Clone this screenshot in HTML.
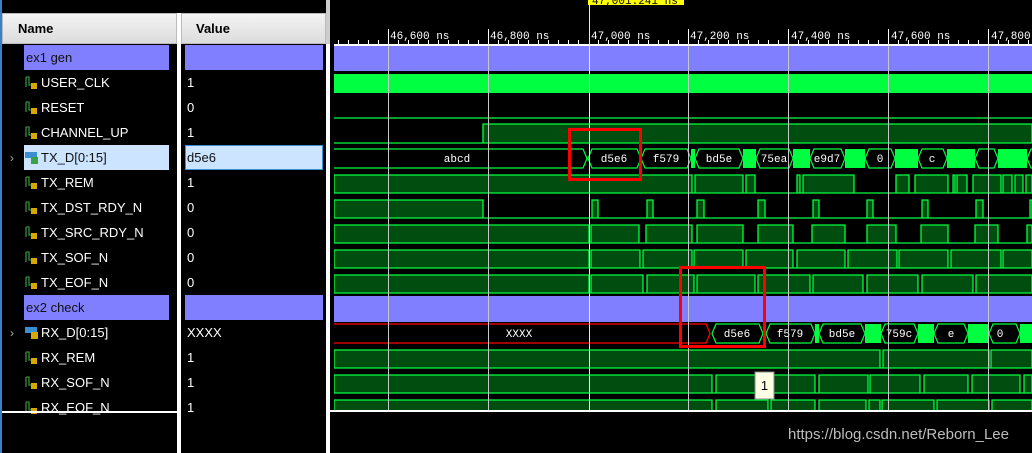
<!DOCTYPE html>
<html><head><meta charset="utf-8"><style>
body{margin:0;width:1032px;height:453px;background:#000;overflow:hidden;position:relative;font-family:"Liberation Sans",sans-serif}
.a{position:absolute}
.hdr{top:13px;height:31px;background:linear-gradient(#f4f4f4,#dcdcdc);border:1px solid #bbb;box-sizing:border-box;font-weight:bold;font-size:13px;color:#000;line-height:30px}
.n{position:absolute;left:24px;height:25px;line-height:25px;font-size:13px;color:#fff;white-space:nowrap}
.v{position:absolute;left:187px;height:25px;line-height:25px;font-size:13px;color:#fff}
.ic{position:absolute;left:25px;width:14px;height:14px}
</style></head><body>
<div class="a" style="left:0;top:0;width:2px;height:453px;background:#3b7fc4"></div>
<div class="a hdr" style="left:2px;width:175px;padding-left:15px">Name</div>
<div class="a hdr" style="left:181px;width:145px;padding-left:14px">Value</div>
<div class="a" style="left:177px;top:13px;width:4px;height:440px;background:#fff"></div>
<div class="a" style="left:326px;top:0;width:4px;height:453px;background:#fff"></div>
<div class="a" style="left:326px;top:0;width:4px;height:44px;background:#ccc"></div>
<!-- highlights -->
<div class="a" style="left:24px;top:45px;width:145px;height:25px;background:#7f7fff"></div>
<div class="a" style="left:185px;top:45px;width:138px;height:25px;background:#7f7fff"></div>
<div class="a" style="left:24px;top:145px;width:145px;height:25px;background:#cce4ff"></div>
<div class="a" style="left:185px;top:145px;width:138px;height:25px;background:#cce4ff;border:1px solid #3a8fd0;box-sizing:border-box"></div>
<div class="a" style="left:24px;top:295px;width:145px;height:25px;background:#7f7fff"></div>
<div class="a" style="left:185px;top:295px;width:138px;height:25px;background:#7f7fff"></div>
<div class="n" style="top:45px;left:26px;color:#111">ex1 gen</div>
<div class="n" style="top:70px;left:41px">USER_CLK</div>
<div class="n" style="top:95px;left:41px">RESET</div>
<div class="n" style="top:120px;left:41px">CHANNEL_UP</div>
<div class="n" style="top:145px;left:41px;color:#111">TX_D[0:15]</div>
<div class="n" style="top:170px;left:41px">TX_REM</div>
<div class="n" style="top:195px;left:41px">TX_DST_RDY_N</div>
<div class="n" style="top:220px;left:41px">TX_SRC_RDY_N</div>
<div class="n" style="top:245px;left:41px">TX_SOF_N</div>
<div class="n" style="top:270px;left:41px">TX_EOF_N</div>
<div class="n" style="top:295px;left:26px;color:#111">ex2 check</div>
<div class="n" style="top:320px;left:41px">RX_D[0:15]</div>
<div class="n" style="top:345px;left:41px">RX_REM</div>
<div class="n" style="top:370px;left:41px">RX_SOF_N</div>
<div class="n" style="top:395px;left:41px">RX_EOF_N</div>
<div class="v" style="top:70px">1</div><div class="v" style="top:95px">0</div><div class="v" style="top:120px">1</div>
<div class="v" style="top:145px;color:#111">d5e6</div><div class="v" style="top:170px">1</div><div class="v" style="top:195px">0</div>
<div class="v" style="top:220px">0</div><div class="v" style="top:245px">0</div><div class="v" style="top:270px">0</div>
<div class="v" style="top:320px">XXXX</div><div class="v" style="top:345px">1</div><div class="v" style="top:370px">1</div><div class="v" style="top:395px">1</div>
<svg class="a" style="left:0;top:0" width="180" height="453">
<g font-family="Liberation Sans" font-size="12" fill="#aaa"><text x="10" y="162">›</text><text x="10" y="337">›</text></g>
<g id="s">
<path d="M26 77v10M26 77h3v8h2" stroke="#3a8a3a" fill="none" stroke-width="1.3"/><rect x="31" y="83" width="6" height="6" fill="#d8a800"/>
</g>
<use href="#s" y="25"/><use href="#s" y="50"/><use href="#s" y="100"/><use href="#s" y="125"/><use href="#s" y="150"/><use href="#s" y="175"/><use href="#s" y="200"/><use href="#s" y="275"/><use href="#s" y="300"/><use href="#s" y="325"/>
<rect x="25" y="152" width="12" height="6" fill="#3a8fd0"/><rect x="31" y="157" width="7" height="7" fill="#3aa04a"/>
<rect x="25" y="327" width="12" height="6" fill="#3a8fd0"/><rect x="31" y="332" width="7" height="7" fill="#d8a800"/>
<rect x="2" y="411" width="175" height="2" fill="#fff"/><rect x="181" y="411" width="145" height="2" fill="#fff"/>
</svg>
<svg class="a" style="left:0;top:0" width="1032" height="453">
<defs><clipPath id="c"><rect x="334" y="0" width="698" height="411"/></clipPath></defs>
<g clip-path="url(#c)">
<!-- ruler -->
<rect x="334" y="44" width="698" height="2" fill="#fff"/>
<path stroke="#fff" stroke-width="1" d="M338.5 40v4M348.5 40v4M358.5 40v4M368.5 40v4M378.5 40v4M398.5 40v4M408.5 40v4M418.5 40v4M428.5 40v4M438.5 40v4M448.5 40v4M458.5 40v4M468.5 40v4M478.5 40v4M498.5 40v4M508.5 40v4M518.5 40v4M528.5 40v4M538.5 40v4M548.5 40v4M558.5 40v4M568.5 40v4M578.5 40v4M598.5 40v4M608.5 40v4M618.5 40v4M628.5 40v4M638.5 40v4M648.5 40v4M658.5 40v4M668.5 40v4M678.5 40v4M698.5 40v4M708.5 40v4M718.5 40v4M728.5 40v4M738.5 40v4M748.5 40v4M758.5 40v4M768.5 40v4M778.5 40v4M798.5 40v4M808.5 40v4M818.5 40v4M828.5 40v4M838.5 40v4M848.5 40v4M858.5 40v4M868.5 40v4M878.5 40v4M898.5 40v4M908.5 40v4M918.5 40v4M928.5 40v4M938.5 40v4M948.5 40v4M958.5 40v4M968.5 40v4M978.5 40v4M998.5 40v4M1008.5 40v4M1018.5 40v4M1028.5 40v4M388.5 29v15M488.5 29v15M688.5 29v15M788.5 29v15M888.5 29v15M988.5 29v15"/>
<g font-family="Liberation Mono" font-size="11" fill="#fff">
<text x="390" y="39">46,600 ns</text><text x="490" y="39">46,800 ns</text><text x="591" y="39">47,000 ns</text><text x="690" y="39">47,200 ns</text><text x="791" y="39">47,400 ns</text><text x="891" y="39">47,600 ns</text><text x="991" y="39">47,800 ns</text></g>
<rect x="588" y="0" width="96" height="5" fill="#ffff00"/>
<text x="592" y="4" font-family="Liberation Mono" font-size="11" fill="#000">47,001.241 ns</text>
<!-- group rows -->
<rect x="334" y="46" width="698" height="25" fill="#7f7fff"/>
<rect x="334" y="296" width="698" height="26" fill="#7f7fff"/>
<rect x="334" y="74" width="698" height="19" fill="#00ff40"/>
<g stroke="#00ff40" stroke-width="1.3" fill="#004d10">
<path d="M334 118H1032" fill="none"/>
<polygon points="334,143 483,143 483,124 1032,124 1032,143"/>
<polygon points="334,193 334,175 692,175 692,193 695,193 695,175 743,175 743,193 746,193 746,175 755,175 755,193 797,193 797,175 800,175 800,193 803,193 803,175 854,175 854,193 896,193 896,175 909,175 909,193 915,193 915,175 948,175 948,193 953,193 953,175 955,175 955,193 957,193 957,175 967,175 967,193 973,193 973,175 1001,175 1001,193 1003,193 1003,175 1012,175 1012,193 1015,193 1015,175 1023,175 1023,193 1026,193 1026,175 1032,175 1032,193"/>
<polygon points="334,218 334,200 483,200 483,218 592,218 592,200 598,200 598,218 647,218 647,200 653,200 653,218 697,218 697,200 704,200 704,218 758,218 758,200 765,200 765,218 813,218 813,200 819,200 819,218 867,218 867,200 873,200 873,218 922,218 922,200 928,200 928,218 976,218 976,200 983,200 983,218 1030,218 1030,200 1032,200 1032,218"/>
<polygon points="334,243 334,225 589,225 589,243 591,243 591,225 639,225 639,243 646,243 646,225 692,225 692,243 697,243 697,225 743,225 743,243 758,243 758,225 793,225 793,243 812,243 812,225 845,225 845,243 867,243 867,225 896,225 896,243 921,243 921,225 948,225 948,243 975,243 975,225 998,225 998,243 1027,243 1027,225 1032,225 1032,243"/>
<polygon points="334,268 334,250 589,250 589,268 591,268 591,250 640,250 640,268 643,268 643,250 692,250 692,268 694,268 694,250 743,250 743,268 746,268 746,250 793,250 793,268 797,268 797,250 845,250 845,268 848,268 848,250 897,250 897,268 899,268 899,250 948,250 948,268 951,268 951,250 1001,250 1001,268 1003,268 1003,250 1032,250 1032,268"/>
<polygon points="334,293 334,275 589,275 589,293 591,293 591,275 643,275 643,293 647,293 647,275 694,275 694,293 697,293 697,275 755,275 755,293 758,293 758,275 810,275 810,293 813,293 813,275 863,275 863,293 867,293 867,275 918,275 918,293 922,293 922,275 973,275 973,293 976,293 976,275 1032,275 1032,293"/>
<polygon points="334,368 334,350 880,350 880,368 883,368 883,350 989,350 989,368 991,368 991,350 1032,350 1032,368"/>
<polygon points="334,393 334,375 712,375 712,393 716,393 716,375 815,375 815,393 819,393 819,375 868,375 868,393 870,393 870,375 920,375 920,393 924,393 924,375 968,375 968,393 972,393 972,375 1020,375 1020,393 1024,393 1024,375 1032,375 1032,393"/>
<polygon points="334,418 334,400 712,400 712,418 716,418 716,400 768,400 768,418 771,418 771,400 815,400 815,418 819,418 819,400 866,400 866,418 869,418 869,400 880,400 880,418 882,418 882,400 934,400 934,418 937,418 937,400 989,400 989,418 992,418 992,400 1032,400 1032,418"/>
</g>
<!-- buses -->
<g fill="#00ff40"><rect x="691" y="149" width="4" height="19"/><rect x="743" y="149" width="13" height="19"/><rect x="793" y="149" width="17" height="19"/><rect x="845" y="149" width="20" height="19"/><rect x="895" y="149" width="23" height="19"/><rect x="947" y="149" width="28" height="19"/><rect x="998" y="149" width="29" height="19"/>
<rect x="815" y="324" width="4" height="19"/><rect x="865" y="324" width="16" height="19"/><rect x="918" y="324" width="16" height="19"/><rect x="968" y="324" width="21" height="19"/><rect x="1020" y="324" width="12" height="19"/></g>
<g stroke="#00ff40" stroke-width="1.2" fill="#000">
<polygon points="330,149 583,149 587,158.5 583,168 330,168"/>
<polygon points="588,158.5 592,149 637,149 641,158.5 637,168 592,168"/>
<polygon points="641,158.5 645,149 687,149 691,158.5 687,168 645,168"/>
<polygon points="695,158.5 699,149 739,149 743,158.5 739,168 699,168"/>
<polygon points="756,158.5 760,149 789,149 793,158.5 789,168 760,168"/>
<polygon points="810,158.5 814,149 841,149 845,158.5 841,168 814,168"/>
<polygon points="865,158.5 869,149 891,149 895,158.5 891,168 869,168"/>
<polygon points="918,158.5 922,149 943,149 947,158.5 943,168 922,168"/>
<polygon points="975,158.5 979,149 994,149 998,158.5 994,168 979,168"/>
<polygon points="1027,158.5 1031,149 1040,149 1040,168 1031,168"/>
<polygon points="712,333.5 716,324 759,324 763,333.5 759,343 716,343"/>
<polygon points="766,333.5 770,324 811,324 815,333.5 811,343 770,343"/>
<polygon points="819,333.5 823,324 861,324 865,333.5 861,343 823,343"/>
<polygon points="881,333.5 885,324 914,324 918,333.5 914,343 885,343"/>
<polygon points="934,333.5 938,324 964,324 968,333.5 964,343 938,343"/>
<polygon points="989,333.5 993,324 1016,324 1020,333.5 1016,343 993,343"/>
</g>
<polygon points="330,324 706,324 710,333.5 706,343 330,343" fill="#000" stroke="#ff0000" stroke-width="1.2"/>
<g font-family="Liberation Mono" font-size="11" fill="#fff" text-anchor="middle">
<text x="457" y="162">abcd</text><text x="614" y="162">d5e6</text><text x="666" y="162">f579</text><text x="719" y="162">bd5e</text><text x="774" y="162">75ea</text><text x="827" y="162">e9d7</text><text x="880" y="162">0</text><text x="932" y="162">c</text>
<text x="519" y="337">XXXX</text><text x="737" y="337">d5e6</text><text x="790" y="337">f579</text><text x="842" y="337">bd5e</text><text x="899" y="337">759c</text><text x="951" y="337">e</text><text x="1000" y="337">0</text></g>
<!-- grid -->
<path stroke="#c8c8c8" stroke-width="1" d="M388.5 46V411M488.5 46V411M688.5 46V411M788.5 46V411M888.5 46V411M988.5 46V411"/>
<path stroke="#ffff40" stroke-width="1" d="M589.5 0V411"/>
</g>
<rect x="330" y="410" width="702" height="2" fill="#fff"/>
<rect x="569.5" y="129.5" width="71" height="50" fill="none" stroke="#ff0000" stroke-width="3"/>
<rect x="680.5" y="267.5" width="84" height="79" fill="none" stroke="#ff0000" stroke-width="3"/>
<rect x="755" y="372" width="19" height="27" fill="#ffffe6" stroke="#888" stroke-width="1"/>
<text x="764.5" y="390" text-anchor="middle" font-family="Liberation Sans" font-size="13" fill="#000">1</text>
<text x="788" y="439" font-family="Liberation Sans" font-size="15" fill="#bdbdbd">https://blog.csdn.net/Reborn_Lee</text>
</svg>
</body></html>
